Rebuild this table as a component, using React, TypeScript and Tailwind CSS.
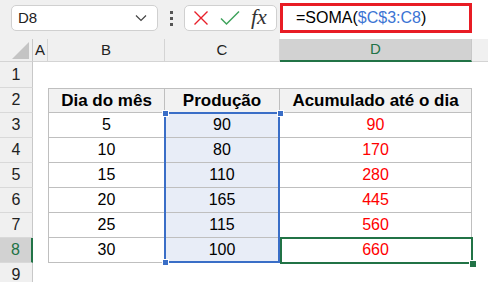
import React from "react";

const GRID = "#bfbfbf";
const HEAD_LINE = "#d4d4d4";

const rows = [
  { n: 3, b: "5", c: "90", d: "90" },
  { n: 4, b: "10", c: "80", d: "170" },
  { n: 5, b: "15", c: "110", d: "280" },
  { n: 6, b: "20", c: "165", d: "445" },
  { n: 7, b: "25", c: "115", d: "560" },
  { n: 8, b: "30", c: "100", d: "660" },
];

function RowHead({ n, active }: { n: number; active?: boolean }) {
  return (
    <div
      className={
        "w-[33px] shrink-0 flex items-center justify-center border-b border-[#d9d9d9] text-[16px] " +
        (active
          ? "bg-[#d2d2d2] text-[#217346] border-r-2 border-r-[#217346]"
          : "bg-[#f0f0f0] text-[#222] border-r border-r-[#c8c8c8]")
      }
    >
      {n}
    </div>
  );
}

export default function App() {
  return (
    <div
      className="w-[488px] h-[282px] overflow-hidden bg-white text-black"
      style={{ fontFamily: '"Liberation Sans", Arial, sans-serif' }}
    >
      {/* formula bar */}
      <div className="h-[39px] flex bg-[#f0f0f0]">
        <div className="flex items-start pt-[5px] pl-[11px]">
          <div className="w-[147px] h-[26px] bg-white border border-[#d0d0d0] rounded-[5px] flex items-center justify-between pl-[6px] pr-[10px]">
            <span className="text-[15px] text-[#222]">D8</span>
            <svg width="12" height="8" viewBox="0 0 12 8">
              <path d="M1 1.5 L6 6.5 L11 1.5" fill="none" stroke="#444" strokeWidth="1.2" />
            </svg>
          </div>
          <div className="w-[26px] h-[26px] flex flex-col items-center justify-center gap-[3px]">
            <div className="w-[3px] h-[3px] bg-[#555]" />
            <div className="w-[3px] h-[3px] bg-[#555]" />
            <div className="w-[3px] h-[3px] bg-[#555]" />
          </div>
          <div className="w-[93px] h-[26px] bg-white border border-[#d0d0d0] rounded-[5px] flex items-center pl-[8px] gap-[11px]">
            <svg width="16" height="16" viewBox="0 0 16 16">
              <path d="M1.5 1.5 L14.5 14.5 M14.5 1.5 L1.5 14.5" stroke="#e8202a" strokeWidth="1.4" fill="none" />
            </svg>
            <svg width="20" height="16" viewBox="0 0 20 16">
              <path d="M1 8.5 L6.5 14 L19 1.5" stroke="#3fa35c" strokeWidth="1.5" fill="none" />
            </svg>
            <span
              className="text-[22px] italic text-[#333] leading-none -mt-[2px]"
              style={{ fontFamily: '"Liberation Serif", "DejaVu Serif", serif' }}
            >
              fx
            </span>
          </div>
        </div>
        <div className="flex-1 ml-[3px] bg-white pt-[3px] pb-[6px]">
          <div className="w-[192px] h-[30px] border-[3px] border-[#e81c24] flex items-center pl-[13px] text-[16px]">
            <span>=SOMA(</span>
            <span className="text-[#3b74d4]">$C$3:C8</span>
            <span>)</span>
          </div>
        </div>
      </div>

      {/* column headers */}
      <div className="h-[23px] flex bg-[#f0f0f0] text-[15px] text-[#222]">
        <div className="w-[33px] shrink-0 border-r border-[#c8c8c8] border-b border-b-[#d4d4d4] flex items-end justify-end pr-[3px] pb-[2px]">
          <svg width="17" height="17" viewBox="0 0 17 17">
            <path d="M17 0 L17 17 L0 17 Z" fill="#c4c4c4" />
          </svg>
        </div>
        <div className="w-[15px] shrink-0 flex items-center justify-center border-r border-[#d4d4d4] border-b" style={{ borderBottomColor: HEAD_LINE }}>
          A
        </div>
        <div className="w-[117px] shrink-0 flex items-center justify-center border-r border-[#d4d4d4] border-b">
          B
        </div>
        <div className="w-[115px] shrink-0 flex items-center justify-center border-r border-[#d4d4d4] border-b">
          C
        </div>
        <div className="w-[192px] shrink-0 flex items-center justify-center bg-[#d2d2d2] text-[#217346] border-r border-[#c8c8c8] border-b-2 border-b-[#217346]">
          D
        </div>
        <div className="flex-1 border-b border-[#d4d4d4]" />
      </div>

      {/* row 1 */}
      <div className="h-[26px] flex">
        <RowHead n={1} />
      </div>

      {/* sheet body */}
      <div className="relative">
        {/* row 2 - table header */}
        <div className="h-[25px] flex">
          <RowHead n={2} />
          <div className="w-[15px] shrink-0" />
          <div className="w-[117px] shrink-0 flex items-center justify-center bg-[#f2f2f2] border border-[#bfbfbf] font-bold text-[17px]">
            Dia do mês
          </div>
          <div className="w-[115px] shrink-0 flex items-center justify-center bg-[#f2f2f2] border-y border-r border-[#bfbfbf] font-bold text-[17px]">
            Produção
          </div>
          <div className="w-[192px] shrink-0 flex items-center justify-center bg-[#f2f2f2] border-y border-r border-[#bfbfbf] font-bold text-[17px]">
            Acumulado até o dia
          </div>
        </div>

        {rows.map((r) => (
          <div key={r.n} className="h-[25px] flex">
            <RowHead n={r.n} active={r.n === 8} />
            <div className="w-[15px] shrink-0" />
            <div
              className="w-[117px] shrink-0 flex items-center justify-center border-x border-b text-[16px]"
              style={{ borderColor: GRID }}
            >
              {r.b}
            </div>
            <div
              className="w-[115px] shrink-0 flex items-center justify-center bg-[#e8edf7] border-r border-b text-[16px]"
              style={{ borderColor: GRID }}
            >
              {r.c}
            </div>
            <div
              className="w-[192px] shrink-0 flex items-center justify-center border-r border-b text-[16px] text-[#ff0000]"
              style={{ borderColor: GRID }}
            >
              {r.d}
            </div>
          </div>
        ))}

        <div className="h-[25px] flex">
          <RowHead n={9} />
        </div>

        {/* selection C3:C8 */}
        <div className="absolute left-[164px] top-[24px] w-[116px] h-[151px] border-2 border-[#3a6ec7] pointer-events-none" />
        <div className="absolute left-[162px] top-[22px] w-[5px] h-[5px] bg-[#3a6ec7] border border-white box-content" />
        <div className="absolute left-[277px] top-[22px] w-[5px] h-[5px] bg-[#3a6ec7] border border-white box-content" />
        <div className="absolute left-[162px] top-[171px] w-[5px] h-[5px] bg-[#3a6ec7] border border-white box-content" />

        {/* active cell D8 */}
        <div className="absolute left-[280px] top-[149px] w-[193px] h-[27px] border-2 border-[#217346] pointer-events-none" />
        <div className="absolute left-[469px] top-[172px] w-[6px] h-[6px] bg-[#217346] border border-white box-content" />
      </div>
    </div>
  );
}
